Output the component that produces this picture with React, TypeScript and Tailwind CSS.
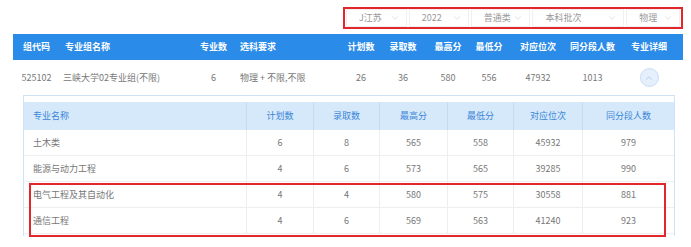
import { ChevronDown, ChevronUp } from 'lucide-react'

const filters = [
  { label: 'J江苏', w: 'w-[61px]' },
  { label: '2022', w: 'w-[60px]' },
  { label: '普通类', w: 'w-[60px]' },
  { label: '本科批次', w: 'w-[92px]' },
  { label: '物理', w: 'w-[54px]' },
]

const majors = [
  { name: '土木类', plan: 6, admit: 8, max: 565, min: 558, rank: 45932, same: 979 },
  { name: '能源与动力工程', plan: 4, admit: 6, max: 573, min: 565, rank: 39285, same: 990 },
  { name: '电气工程及其自动化', plan: 4, admit: 4, max: 580, min: 575, rank: 30558, same: 881 },
  { name: '通信工程', plan: 4, admit: 6, max: 569, min: 563, rank: 41240, same: 923 },
]

function MajorRow({ m }: { m: (typeof majors)[number] }) {
  return (
    <div className="flex h-[26px] items-center border-b border-[#eeeeee] text-[9px] text-[#777]">
      <div className="w-[222px] pl-[9px]">{m.name}</div>
      <div className="w-[67px] h-full flex items-center justify-center border-l border-[#eeeeee]">{m.plan}</div>
      <div className="w-[66px] h-full flex items-center justify-center border-l border-[#eeeeee]">{m.admit}</div>
      <div className="w-[68px] h-full flex items-center justify-center border-l border-[#eeeeee]">{m.max}</div>
      <div className="w-[66px] h-full flex items-center justify-center border-l border-[#eeeeee]">{m.min}</div>
      <div className="w-[69px] h-full flex items-center justify-center border-l border-[#eeeeee]">{m.rank}</div>
      <div className="flex-1 h-full flex items-center justify-center border-l border-[#eeeeee]">{m.same}</div>
    </div>
  )
}

export default function App() {
  return (
    <div className="w-[691px] h-[247px] bg-white overflow-hidden font-['Noto_Sans_CJK_SC','Noto_Sans',sans-serif]">
      {/* filters */}
      <div className="flex justify-end pr-[8px] pt-[7px]">
        <div className="flex h-[22px] w-[340px] items-center gap-[2px] border-2 border-[#e3262c] px-[1px]">
          {filters.map((f) => (
            <div
              key={f.label}
              className={`${f.w} h-[18px] flex items-center justify-between pl-[12px] pr-[6px] border border-[#f0f0f0] text-[9px] text-[#999]`}
            >
              <span>{f.label}</span>
              <ChevronDown className="w-[10px] h-[10px] text-[#ccc]" strokeWidth={1.5} />
            </div>
          ))}
        </div>
      </div>

      {/* group table */}
      <div className="ml-[13px] mt-[5px] w-[670px]">
        <div className="flex h-[26px] items-center bg-[#2a8be8] text-[9px] font-bold text-white">
          <div className="w-[47px] text-center">组代码</div>
          <div className="w-[135px] pl-[5px]">专业组名称</div>
          <div className="w-[37px] text-center">专业数</div>
          <div className="w-[108px] pl-[8px]">选科要求</div>
          <div className="w-[42px] text-center">计划数</div>
          <div className="w-[42px] text-center">录取数</div>
          <div className="w-[48px] text-center">最高分</div>
          <div className="w-[34px] text-center">最低分</div>
          <div className="w-[64px] text-center">对应位次</div>
          <div className="w-[45px] text-center">同分段人数</div>
          <div className="flex-1 text-center">专业详细</div>
        </div>
        <div className="flex h-[35px] items-center text-[9px] text-[#777]">
          <div className="w-[47px] text-center">525102</div>
          <div className="w-[135px] pl-[3px]">三峡大学02专业组(不限)</div>
          <div className="w-[37px] text-center">6</div>
          <div className="w-[108px] pl-[8px]">物理 + 不限,不限</div>
          <div className="w-[42px] text-center">26</div>
          <div className="w-[42px] text-center">36</div>
          <div className="w-[48px] text-center">580</div>
          <div className="w-[34px] text-center">556</div>
          <div className="w-[64px] text-center">47932</div>
          <div className="w-[45px] text-center">1013</div>
          <div className="flex-1 flex justify-center">
            <div className="w-[19px] h-[19px] rounded-full bg-[#e6f0fc] border border-[#c9ddf5] flex items-center justify-center">
              <ChevronUp className="w-[10px] h-[10px] text-[#8fb6e6]" strokeWidth={1.5} />
            </div>
          </div>
        </div>

        {/* major detail */}
        <div className="relative ml-[10px] w-[652px] h-[141px] border-x border-t border-[#cfe3f6] pt-[6px]">
          <div className="flex h-[28px] items-center bg-[#d6e9fb] text-[9px] text-[#3a86d8]">
            <div className="w-[222px] pl-[9px]">专业名称</div>
            <div className="w-[67px] h-full flex items-center justify-center border-l border-[#c3dcf3]">计划数</div>
            <div className="w-[66px] h-full flex items-center justify-center border-l border-[#c3dcf3]">录取数</div>
            <div className="w-[68px] h-full flex items-center justify-center border-l border-[#c3dcf3]">最高分</div>
            <div className="w-[66px] h-full flex items-center justify-center border-l border-[#c3dcf3]">最低分</div>
            <div className="w-[69px] h-full flex items-center justify-center border-l border-[#c3dcf3]">对应位次</div>
            <div className="flex-1 h-full flex items-center justify-center border-l border-[#c3dcf3]">同分段人数</div>
          </div>
          {majors.map((m) => (
            <MajorRow key={m.name} m={m} />
          ))}
          <div className="absolute left-[5px] top-[87px] w-[637px] h-[54px] border-2 border-[#e3262c] pointer-events-none" />
        </div>
      </div>
    </div>
  )
}
